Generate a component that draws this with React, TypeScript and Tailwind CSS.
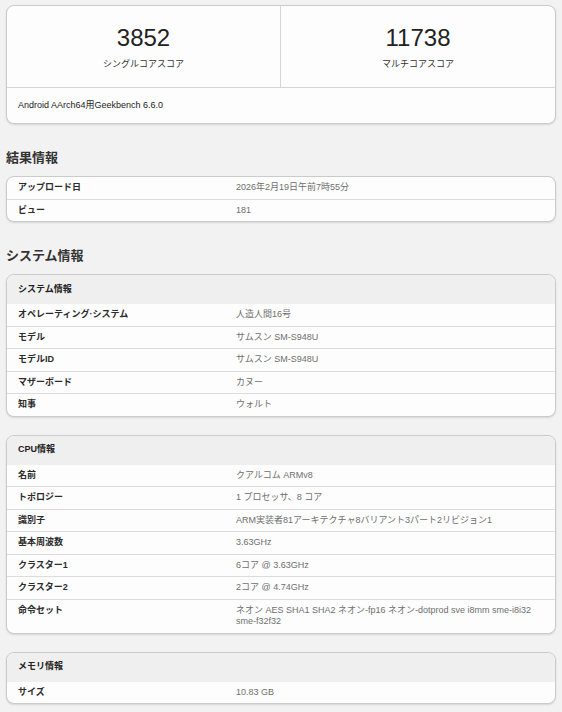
import React from "react";

type Row = { label: string; value: string };

const FONT = "font-['Liberation_Sans','Noto_Sans_CJK_JP',sans-serif]";

const resultRows: Row[] = [
  { label: "アップロード日", value: "2026年2月19日午前7時55分" },
  { label: "ビュー", value: "181" },
];

const systemRows: Row[] = [
  { label: "オペレーティング·システム", value: "人造人間16号" },
  { label: "モデル", value: "サムスン SM-S948U" },
  { label: "モデルID", value: "サムスン SM-S948U" },
  { label: "マザーボード", value: "カヌー" },
  { label: "知事", value: "ウォルト" },
];

const cpuRows: Row[] = [
  { label: "名前", value: "クアルコム ARMv8" },
  { label: "トポロジー", value: "1 プロセッサ、8 コア" },
  { label: "識別子", value: "ARM実装者81アーキテクチャ8バリアント3パート2リビジョン1" },
  { label: "基本周波数", value: "3.63GHz" },
  { label: "クラスター1", value: "6コア @ 3.63GHz" },
  { label: "クラスター2", value: "2コア @ 4.74GHz" },
  {
    label: "命令セット",
    value: "ネオン AES SHA1 SHA2 ネオン-fp16 ネオン-dotprod sve i8mm sme-i8i32 sme-f32f32",
  },
];

const memoryRows: Row[] = [{ label: "サイズ", value: "10.83 GB" }];

function Card({ children }: { children: React.ReactNode }) {
  return (
    <div className="bg-[#fdfdfd] border border-[#cbcbcb] rounded-[8px] shadow-[0_1px_2px_rgba(0,0,0,0.12)] overflow-hidden">
      {children}
    </div>
  );
}

function InfoTable({ title, rows }: { title?: string; rows: Row[] }) {
  return (
    <Card>
      {title && (
        <div className="h-[29px] bg-[#efefef] flex items-center px-[11px] text-[9px] font-bold text-[#222]">
          {title}
        </div>
      )}
      {rows.map((r, i) => (
        <div
          key={r.label}
          className={`flex text-[9px] leading-[11.5px] ${i > 0 ? "border-t border-[#dcdcdc]" : ""}`}
        >
          <div className="w-[229px] shrink-0 pl-[11px] py-[5px] font-bold text-[#2b2b2b]">{r.label}</div>
          <div className="flex-1 pr-[12px] py-[5px] text-[#6f6f6f]">{r.value}</div>
        </div>
      ))}
    </Card>
  );
}

function Heading({ children }: { children: React.ReactNode }) {
  return (
    <h2 className="mt-[24px] mb-[8px] text-[13px] leading-[20px] font-bold text-[#333]">{children}</h2>
  );
}

export default function App() {
  return (
    <div className={`min-h-screen bg-[#f2f2f2] px-[6px] pt-[5px] pb-[10px] ${FONT}`}>
      <Card>
        <div className="grid grid-cols-2 border-b border-[#d6d6d6]">
          <div className="flex flex-col items-center pt-[18px] pb-[17px] border-r border-[#d6d6d6]">
            <div className="text-[24px] leading-[28px] text-[#222]">3852</div>
            <div className="mt-[6px] text-[9px] leading-[12px] text-[#333]">シングルコアスコア</div>
          </div>
          <div className="flex flex-col items-center pt-[18px] pb-[17px]">
            <div className="text-[24px] leading-[28px] text-[#222]">11738</div>
            <div className="mt-[6px] text-[9px] leading-[12px] text-[#333]">マルチコアスコア</div>
          </div>
        </div>
        <div className="h-[35px] flex items-center px-[11px] text-[9px] text-[#222]">
          Android AArch64用Geekbench 6.6.0
        </div>
      </Card>

      <Heading>結果情報</Heading>
      <InfoTable rows={resultRows} />

      <Heading>システム情報</Heading>
      <InfoTable title="システム情報" rows={systemRows} />

      <div className="mt-[18px]">
        <InfoTable title="CPU情報" rows={cpuRows} />
      </div>

      <div className="mt-[18px]">
        <InfoTable title="メモリ情報" rows={memoryRows} />
      </div>
    </div>
  );
}
